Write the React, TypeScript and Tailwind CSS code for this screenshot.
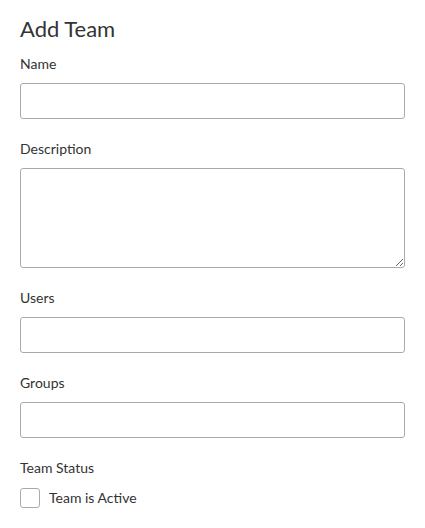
import React from "react";

function Field({ label, children }: { label: string; children: React.ReactNode }) {
  return (
    <div className="flex flex-col">
      <label className="text-[14px] leading-[20px] text-[#333]">{label}</label>
      <div className="mt-[9px]">{children}</div>
    </div>
  );
}

export default function App() {
  return (
    <div className="min-h-screen bg-white px-5 pt-[15px] text-[#333]" style={{ fontFamily: "Lato, 'Open Sans', sans-serif" }}>
      <h1 className="text-[22px] leading-[28px] font-normal text-[#333]">Add Team</h1>
      <div className="mt-[11px] flex flex-col gap-[20px]">
        <Field label="Name">
          <input className="block h-[36px] w-full rounded-[3px] border border-[#aaa] bg-white px-2 text-[14px] outline-none" />
        </Field>
        <Field label="Description">
          <textarea className="block h-[100px] w-full rounded-[3px] border border-[#aaa] bg-white px-2 py-1 text-[14px] outline-none" />
        </Field>
        <Field label="Users">
          <input className="block h-[36px] w-full rounded-[3px] border border-[#aaa] bg-white px-2 text-[14px] outline-none" />
        </Field>
        <Field label="Groups">
          <input className="block h-[36px] w-full rounded-[3px] border border-[#aaa] bg-white px-2 text-[14px] outline-none" />
        </Field>
        <div className="flex flex-col">
          <span className="text-[14px] leading-[20px] text-[#333]">Team Status</span>
          <label className="mt-[10px] flex items-center gap-[9px]">
            <span className="block h-[20px] w-[20px] rounded-[3px] border border-[#aaa] bg-white" />
            <span className="text-[14px] leading-[20px] text-[#333]">Team is Active</span>
          </label>
        </div>
      </div>
    </div>
  );
}
